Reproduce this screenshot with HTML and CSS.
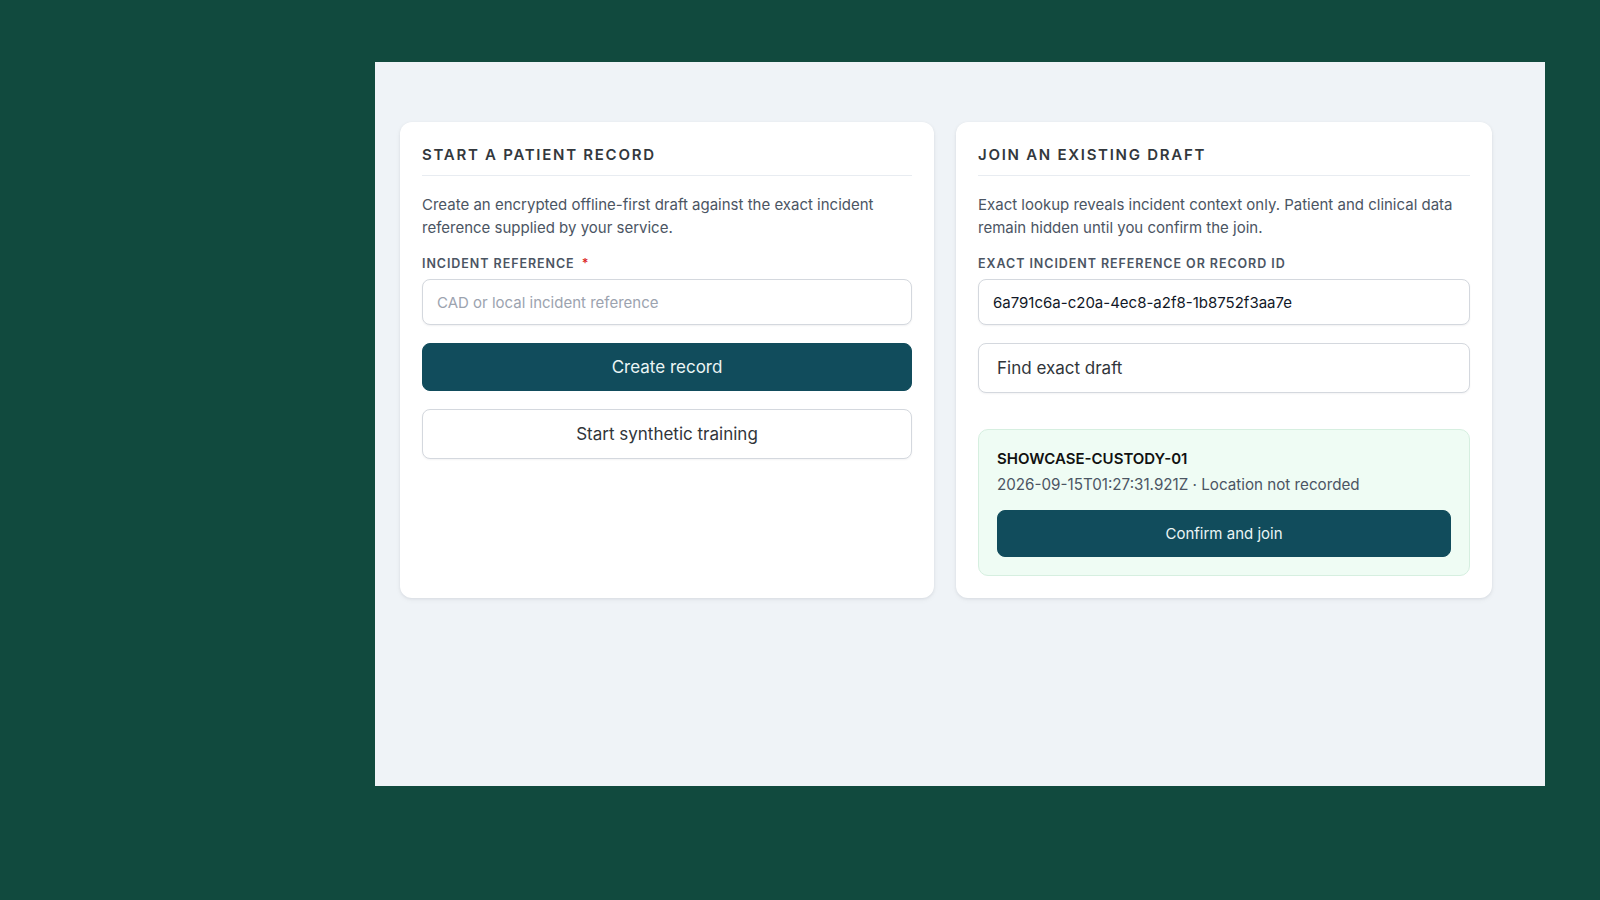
FILE: index.html
```html
<!DOCTYPE html>
<html lang="en">
<head>
<meta charset="utf-8">
<title>Patient record</title>
<link rel="stylesheet" href="styles.css">
</head>
<body>
<main class="frame">
  <div class="grid">
    <section class="card">
      <h2 class="card-title">Start a patient record</h2>
      <p class="desc">Create an encrypted offline-first draft against the exact incident reference supplied by your service.</p>
      <label class="label" for="ref">Incident reference <span class="req">*</span></label>
      <input class="input" id="ref" type="text" placeholder="CAD or local incident reference">
      <button class="btn btn-primary btn-lg">Create record</button>
      <button class="btn btn-outline btn-lg">Start synthetic training</button>
    </section>
    <section class="card">
      <h2 class="card-title">Join an existing draft</h2>
      <p class="desc">Exact lookup reveals incident context only. Patient and clinical data remain hidden until you confirm the join.</p>
      <label class="label" for="lookup">Exact incident reference or record ID</label>
      <input class="input" id="lookup" type="text" value="6a791c6a-c20a-4ec8-a2f8-1b8752f3aa7e">
      <button class="btn btn-outline btn-find">Find exact draft</button>
      <div class="match">
        <div class="match-id">SHOWCASE-CUSTODY-01</div>
        <div class="match-meta">2026-09-15T01:27:31.921Z · Location not recorded</div>
        <button class="btn btn-primary btn-confirm">Confirm and join</button>
      </div>
    </section>
  </div>
</main>
</body>
</html>
```

FILE: styles.css
```css
* { box-sizing: border-box; }

html, body {
  margin: 0;
  padding: 0;
}

body {
  background: #114a3e;
  font-family: Inter, "Noto Sans", sans-serif;
  width: 1600px;
  height: 900px;
  overflow: hidden;
  padding-top: 62px;
  padding-left: 375px;
}

.frame {
  width: 1170px;
  height: 724px;
  background: #eff3f7;
  padding: 60px 53px 0 25px;
}

.grid {
  display: grid;
  grid-template-columns: 534px 536px;
  column-gap: 22px;
  align-items: stretch;
}

.card {
  background: #ffffff;
  border-radius: 12px;
  box-shadow: 0 1px 3px rgba(15, 23, 42, 0.08), 0 2px 6px rgba(15, 23, 42, 0.04);
  padding: 22px;
  display: flex;
  flex-direction: column;
}

.card-title {
  margin: 0;
  font-size: 15px;
  line-height: 22px;
  font-weight: 600;
  letter-spacing: 0.115em;
  text-transform: uppercase;
  color: #33383d;
  padding-bottom: 9px;
  border-bottom: 1px solid #e8ecf1;
}

.desc {
  margin: 18px 0 17px;
  font-size: 15px;
  line-height: 22.5px;
  color: #4b5563;
}

.label {
  display: block;
  font-size: 12.5px;
  line-height: 16px;
  font-weight: 600;
  letter-spacing: 0.075em;
  text-transform: uppercase;
  color: #4b5563;
  margin-bottom: 7px;
}

.req {
  color: #dc2626;
  margin-left: 3px;
}

.input {
  display: block;
  width: 100%;
  height: 46px;
  border: 1px solid #d4d8de;
  border-radius: 8px;
  background: #ffffff;
  padding: 0 14px;
  font-family: Inter, "Noto Sans", sans-serif;
  font-size: 15px;
  color: #111827;
  box-shadow: 0 1px 2px rgba(15, 23, 42, 0.06);
  outline: none;
}

.input::placeholder {
  color: #9ca3af;
}

.btn {
  display: block;
  width: 100%;
  border-radius: 8px;
  font-family: Inter, "Noto Sans", sans-serif;
  cursor: pointer;
}

.btn-primary {
  background: #114c5c;
  border: 1px solid #114c5c;
  color: #eaf5f5;
}

.btn-outline {
  background: #ffffff;
  border: 1px solid #d4d8de;
  color: #30353a;
  box-shadow: 0 1px 2px rgba(15, 23, 42, 0.05);
}

.btn-lg {
  font-size: 17px;
  margin-top: 18px;
}

.btn-primary.btn-lg {
  height: 48px;
}

.btn-outline.btn-lg {
  height: 50px;
}

.btn-find {
  height: 50px;
  margin-top: 18px;
  text-align: left;
  padding: 0 18px;
  font-size: 17px;
}

.match {
  margin-top: 36px;
  background: #effcf4;
  border: 1px solid #d6efe0;
  border-radius: 10px;
  padding: 18px;
}

.match-id {
  font-size: 15px;
  line-height: 22px;
  font-weight: 600;
  color: #111111;
}

.match-meta {
  margin-top: 4px;
  font-size: 15.2px;
  line-height: 22px;
  color: #4b5563;
}

.btn-confirm {
  margin-top: 14px;
  height: 47px;
  font-size: 15px;
}
```
